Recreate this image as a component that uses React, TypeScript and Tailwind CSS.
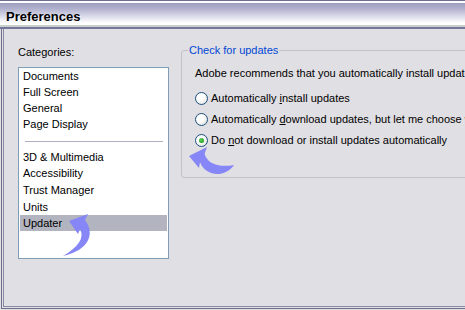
import React from "react";

function Radio({ checked }: { checked?: boolean }) {
  return (
    <span className="w-[13px] h-[13px] shrink-0 rounded-full border border-[#1c5180] bg-[radial-gradient(circle_at_35%_35%,#ffffff_35%,#d6d6d0_100%)] flex items-center justify-center">
      {checked && (
        <span className="w-[5px] h-[5px] rounded-full bg-[radial-gradient(circle_at_40%_40%,#5fd35f_0%,#21a121_70%)]" />
      )}
    </span>
  );
}

export default function App() {
  const group1 = ["Documents", "Full Screen", "General", "Page Display"];
  return (
    <div className="relative w-[465px] h-[310px] overflow-hidden bg-[#e0dfe3] flex flex-col text-[11px] text-black [font-family:'Liberation_Sans',Arial,sans-serif]">
      {/* Title bar */}
      <div className="h-[29px] shrink-0 flex items-center pt-[3px] pl-[6px] bg-[linear-gradient(180deg,#6e6e8e_0px,#6e6e8e_1px,#fdfdff_1px,#fdfdff_3px,#9d9dbf_3px,#b2b2cf_9px,#dedeec_17px,#ffffff_23px,#ffffff_25px,#c8d0cc_25px,#c8d0cc_27px,#76769a_27px,#76769a_29px)]">
        <span className="text-[13px] font-bold leading-none [text-shadow:1px_1px_0_rgba(255,255,255,0.6)]">
          Preferences
        </span>
      </div>

      {/* Client area with frame */}
      <div className="flex-1 ml-[1px] mb-[1px] border-l border-b border-[#6f6f8c] pl-[1px] pb-[1px] flex">
        <div className="flex-1 border-l border-b border-[#8a8aa4] flex pt-[16px] pl-[14px]">
          {/* Left column */}
          <div className="w-[151px] shrink-0 flex flex-col">
            <div className="h-[13px] leading-[13px] mt-[1px]">Categories:</div>
            <div className="mt-[8px] h-[192px] bg-white border border-[#7f9db9] px-[1px] flex flex-col">
              {group1.map((t) => (
                <div key={t} className="h-[16px] leading-[16px] pl-[3px]">
                  {t}
                </div>
              ))}
              <div className="mt-[9px] mb-[7px] ml-[5px] mr-[4px] h-px bg-[#aeb0c0]" />
              <div className="h-[16px] leading-[16px] pl-[3px]">3D &amp; Multimedia</div>
              <div className="h-[17px] leading-[16px] pl-[3px]">Accessibility</div>
              <div className="h-[17px] leading-[17px] pl-[3px]">Trust Manager</div>
              <div className="h-[16px] leading-[16px] pl-[3px]">Units</div>
              <div className="h-[16px] leading-[16px] pl-[3px] bg-[#b2b4bf]">Updater</div>
            </div>
          </div>

          {/* Right column */}
          <div className="ml-[12px] shrink-0">
            <fieldset className="w-[320px] h-[134px] border border-[#c4c2c8] rounded-[3px] -mt-[1px]">
              <legend className="ml-[6px] px-[1px] leading-[13px] text-[#0046d5]">
                Check for updates
              </legend>
              <div className="pl-[13px] pt-[10px] whitespace-nowrap flex flex-col">
                <div className="h-[13px] leading-[13px]">
                  Adobe recommends that you automatically install updates.
                </div>
                <div className="mt-[12px] h-[13px] flex items-center gap-[3px]">
                  <Radio />
                  <span className="leading-[13px]">
                    Automatically <span className="underline">i</span>nstall updates
                  </span>
                </div>
                <div className="mt-[8px] h-[13px] flex items-center gap-[3px]">
                  <Radio />
                  <span className="leading-[13px]">
                    Automatically <span className="underline">d</span>ownload updates, but let me choose when to install them
                  </span>
                </div>
                <div className="mt-[8px] h-[13px] flex items-center gap-[3px]">
                  <Radio checked />
                  <span className="leading-[13px]">
                    Do <span className="underline">n</span>ot download or install updates automatically
                  </span>
                </div>
              </div>
            </fieldset>
          </div>
        </div>
      </div>

      {/* Annotation arrows */}
      <svg
        className="absolute left-0 top-0 pointer-events-none"
        width="465"
        height="310"
        viewBox="0 0 465 310"
      >
        <path
          d="M69 221 L88 214 L85 220 C95 233 90 250 63 256 C78 247 85 238 80 229 L78 234 Z"
          fill="#8686f6"
        />
        <path
          d="M189 156 L207 147 L204.6 153.7 C207 163 218 168 234 165 C225 178 206 177 200 162.3 L199 168 Z"
          fill="#8686f6"
        />
      </svg>
    </div>
  );
}
